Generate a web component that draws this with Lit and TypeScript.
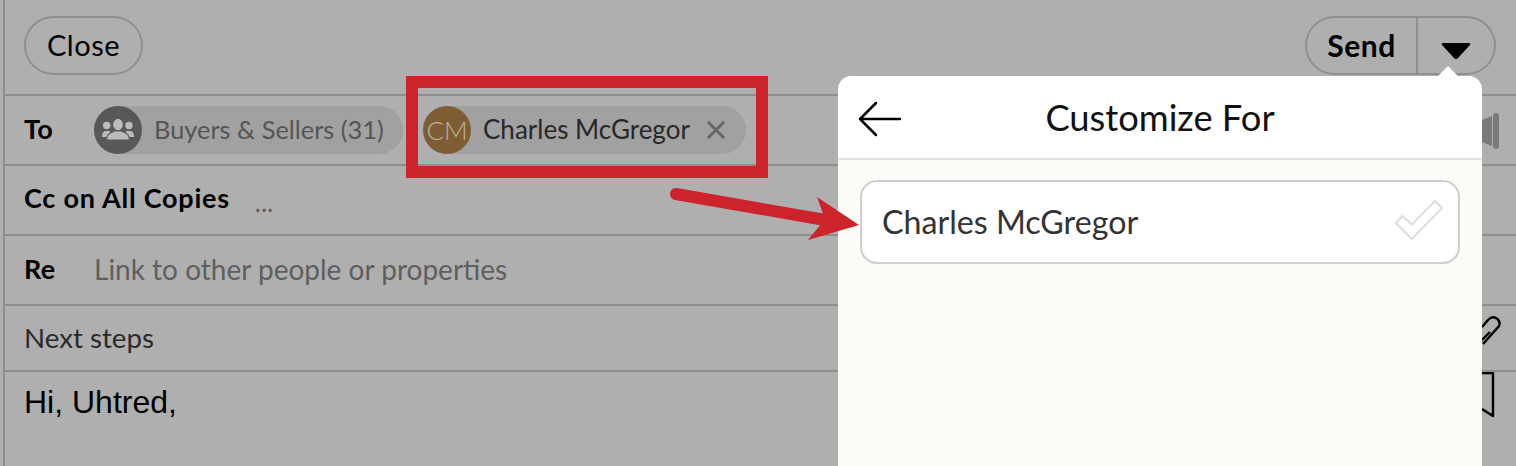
import { LitElement, html, css } from "lit";
import { customElement } from "lit/decorators.js";

@customElement("app-root")
export class AppRoot extends LitElement {
  static styles = css`
    :host { display: block; width: 1516px; height: 466px; overflow: hidden; position: relative; background: #afafaf; font-family: Lato, "Liberation Sans", sans-serif; color: #000; }
    * { box-sizing: border-box; }
    .main { margin-left: 3px; border-left: 2px solid #8e8e8e; height: 466px; display: flex; flex-direction: column; }
    .row { display: flex; align-items: center; border-bottom: 2px solid #8e8e8e; padding-left: 19px; flex: none; }
    .top { height: 96px; justify-content: space-between; padding-right: 20px; padding-bottom: 3px; }
    .close { height: 59px; width: 119px; border: 2px solid #8f8f8f; border-radius: 30px; display: flex; align-items: center; justify-content: center; font-size: 29px; letter-spacing: 0.5px; padding-bottom: 2px; }
    .send { height: 59px; width: 191px; border: 2px solid #8f8f8f; border-radius: 30px; display: flex; }
    .send b { width: 111px; border-right: 2px solid #8f8f8f; display: flex; align-items: center; justify-content: center; font-size: 30px; font-weight: 700; letter-spacing: 0.5px; padding-bottom: 2px; }
    .send span { flex: 1; display: flex; align-items: center; justify-content: center; padding-top: 11px; }
    .to { height: 70px; }
    .cc { height: 70px; }
    .re { height: 70px; }
    .steps { height: 66px; font-size: 27.7px; color: #2b2b2b; padding-bottom: 2px; }
    .label { font-size: 27px; font-weight: 700; letter-spacing: 0.3px; }
    .to .label { width: 70px; padding-bottom: 3px; }
    .re .label { width: 70px; padding-bottom: 4px; }
    .cc .label { padding-bottom: 5px; letter-spacing: 0.75px; }
    .dots { margin-left: 25px; font-size: 26px; color: #5e5e5e; padding-top: 4px; }
    .ph { font-size: 28px; color: #5f5f5f; padding-bottom: 2px; }
    .chip { height: 48px; border-radius: 24px; background: #a1a1a1; display: flex; align-items: center; font-size: 26px; }
    .c1 { width: 309px; color: #555; font-size: 25.4px; }
    .c2 { width: 323px; margin-left: 20px; color: #282828; }
    .name { padding-bottom: 3px; }
    .av { width: 48px; height: 48px; border-radius: 50%; display: flex; align-items: center; justify-content: center; flex: none; margin-right: 12px; }
    .av1 { background: #585858; }
    .av2 { background: #7e5d35; color: #bdb3a4; font-size: 26px; font-weight: 300; }
    .x { margin-left: 16px; display: flex; }
    .body { padding: 12px 0 0 19px; font: 32px "Liberation Sans", Arial, sans-serif; flex: 1; position: relative; }
    .pop { position: absolute; left: 838px; top: 76px; width: 644px; height: 400px; background: #fbfcf7; border-radius: 14px 14px 0 0; display: flex; flex-direction: column; }
    .pop::before { content: ""; position: absolute; right: 27px; top: -7px; width: 14px; height: 14px; background: #fff; transform: rotate(45deg); }
    .head { position: relative; height: 84px; background: #fff; border-radius: 14px 14px 0 0; border-bottom: 2px solid #e2e2de; display: flex; align-items: center; justify-content: center; font-size: 36.3px; color: #111; }
    .back { position: absolute; left: 20px; top: 24px; }
    .item { margin: 20px 22px 0; height: 84px; background: #fff; border: 2px solid #cfcfcf; border-radius: 17px; display: flex; align-items: center; justify-content: space-between; padding: 0 15px 2px 20px; font-size: 32.2px; color: #333; }
    .check { margin-bottom: 1px; }
    .side { position: absolute; }
    .speaker { left: 1482px; top: 112px; }
    .clip { left: 1482px; top: 316px; }
    .flag { left: 1482px; top: 372px; }
    .box { position: absolute; left: 406px; top: 76px; width: 362px; height: 102px; border: 12px solid #cd232c; }
    .arrow { position: absolute; left: 660px; top: 180px; }
  `;

  render() {
    return html`
      <div class="main">
        <div class="row top">
          <div class="close">Close</div>
          <div class="send">
            <b>Send</b>
            <span><svg width="32" height="20" viewBox="0 0 32 20"><path d="M3 2h26q2 0 1 2L18 17q-2 2-4 0L2 4q-1-2 1-2z" fill="#000"/></svg></span>
          </div>
        </div>
        <div class="row to">
          <div class="label">To</div>
          <div class="chip c1">
            <div class="av av1">
              <svg width="34" height="24" viewBox="0 0 34 24"><g fill="#bcbcbc"><circle cx="5.7" cy="7.5" r="3.7"/><circle cx="28" cy="7.5" r="3.7"/><path d="M1 19q0-5 3-6h5v6z"/><path d="M33 19q0-5-3-6h-5v6z"/></g><ellipse cx="17" cy="6.5" rx="5.4" ry="6.3" fill="#bcbcbc" stroke="#585858" stroke-width="1.2"/><path d="M5.5 22q0-6 6-8l2.500-1h6l2.500 1q6 2 6 8z" fill="#bcbcbc" stroke="#585858" stroke-width="1.2"/></svg>
            </div>
            <span class="name">Buyers &amp; Sellers (31)</span>
          </div>
          <div class="chip c2">
            <div class="av av2">CM</div>
            <span class="name">Charles McGregor</span>
            <span class="x"><svg width="20" height="20" viewBox="0 0 20 20"><path d="M2 2l16 16M18 2L2 18" stroke="#666" stroke-width="3" fill="none"/></svg></span>
          </div>
        </div>
        <div class="row cc"><div class="label">Cc on All Copies</div><div class="dots">...</div></div>
        <div class="row re"><div class="label">Re</div><div class="ph">Link to other people or properties</div></div>
        <div class="row steps">Next steps</div>
        <div class="body">Hi, Uhtred,</div>
      </div>

      <svg class="side speaker" width="17" height="38" viewBox="0 0 17 38"><path d="M0 8L10 4v30L0 30z" fill="#7a7a7a"/><rect x="11" y="1" width="6" height="36" rx="3" fill="#7a7a7a"/></svg>
      <svg class="side clip" width="20" height="32" viewBox="0 0 20 32"><path d="M0 11L6 4Q10 0 14 2Q19 5 17 10L1 28M8 16L0 24" fill="none" stroke="#000" stroke-width="2.400"/></svg>
      <svg class="side flag" width="14" height="46" viewBox="0 0 14 46"><path d="M0 1h11v43L0 37" fill="none" stroke="#000" stroke-width="2.400" stroke-linejoin="round"/></svg>

      <div class="pop">
        <div class="head">
          <svg class="back" width="44" height="38" viewBox="0 0 44 38"><path d="M42 19H2M18 3L2 19l16 16" fill="none" stroke="#000" stroke-width="2.500" stroke-linecap="round" stroke-linejoin="round"/></svg>
          Customize For
        </div>
        <div class="item">
          Charles McGregor
          <svg class="check" width="48" height="41" viewBox="0 0 48 41"><path d="M1 23L7.300 16L16.700 24.500L40 1L47 8L16.700 39z" fill="none" stroke="#dedede" stroke-width="2"/></svg>
        </div>
      </div>

      <div class="box"></div>
      <svg class="arrow" width="200" height="64" viewBox="0 0 200 64"><path d="M16 14L165 40" stroke="#cd232c" stroke-width="12" stroke-linecap="round" fill="none"/><path d="M157 17L199 45 148 60 165 39z" fill="#cd232c"/></svg>
    `;
  }
}
